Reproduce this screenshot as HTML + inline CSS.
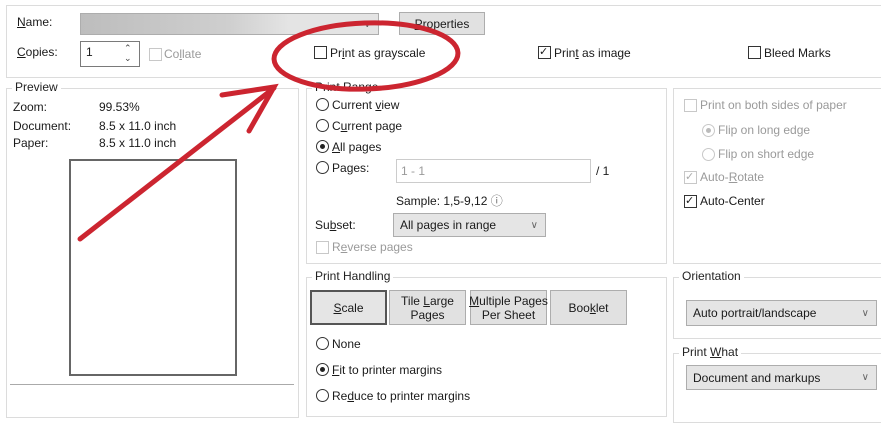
<!DOCTYPE html>
<html><head><meta charset="utf-8"><style>
*{margin:0;padding:0;box-sizing:border-box}
body{width:881px;height:410px;overflow:hidden;background:#fff;font-family:"Liberation Sans",sans-serif;font-size:12px;color:#1a1a1a;position:relative}
.a{position:absolute;white-space:nowrap}
.box{position:absolute;border:1px solid #dcdcdc}
.lg{position:absolute;background:#fff;padding:0 3px;color:#222}
.cb{position:absolute;width:13px;height:13px;border:1px solid #333;background:#fff}
.cb.d{border-color:#c8c8c8}
.rd{position:absolute;width:13px;height:13px;border:1px solid #333;border-radius:50%;background:#fff}
.rd.on::after{content:"";position:absolute;left:3px;top:3px;width:5px;height:5px;border-radius:50%;background:#222}
.rd.d{border-color:#c8c8c8}.rd.d.on::after{background:#bbb}
.dis{color:#9a9a9a}
.btn{position:absolute;background:#e1e1e1;border:1px solid #adadad;text-align:center;line-height:14px;display:flex;align-items:center;justify-content:center}
.btn span{display:block;white-space:nowrap}
.combo{position:absolute;background:#e5e5e5;border:1px solid #adadad;padding-left:6px;display:flex;align-items:center}
.combo::after{content:"\2228";position:absolute;right:7px;font-size:10px;color:#666}
u{text-decoration:underline}
</style></head><body>
<div class="box" style="left:6px;top:5px;width:880px;height:73px"></div>
<div class="a" style="left:17px;top:15px"><u>N</u>ame:</div>
<div class="combo" style="left:80px;top:13px;width:299px;height:22px;background:linear-gradient(90deg,#bdbdbd,#cfcfcf 50%,#e4e4e4 70%,#e4e4e4)"></div>
<div class="btn" style="left:399px;top:12px;width:86px;height:23px"><span><u>P</u>roperties</span></div>
<div class="a" style="left:17px;top:45px"><u>C</u>opies:</div>
<div class="a" style="left:80px;top:41px;width:60px;height:26px;border:1px solid #7a7a7a;padding:3px 5px">1</div>
<div class="a" style="left:124px;top:43px;font-size:9px;line-height:10px;color:#444">&#8963;<br>&#8964;</div>
<div class="cb d" style="left:149px;top:48px"></div><div class="a dis" style="left:164px;top:47px">Co<u>l</u>late</div>
<div class="cb" style="left:314px;top:46px"></div><div class="a" style="left:330px;top:46px">Pr<u>i</u>nt as grayscale</div>
<div class="cb" style="left:538px;top:46px;font-size:11px;line-height:11px">&#10003;</div><div class="a" style="left:554px;top:46px">Prin<u>t</u> as image</div>
<div class="cb" style="left:748px;top:46px"></div><div class="a" style="left:764px;top:46px">Bleed Marks</div>

<div class="box" style="left:6px;top:88px;width:293px;height:330px"></div>
<div class="lg" style="left:12px;top:80px">Preview</div>
<div class="a" style="left:13px;top:100px">Zoom:</div><div class="a" style="left:99px;top:100px">99.53%</div>
<div class="a" style="left:13px;top:119px">Document:</div><div class="a" style="left:99px;top:119px">8.5 x 11.0 inch</div>
<div class="a" style="left:13px;top:136px">Paper:</div><div class="a" style="left:99px;top:136px">8.5 x 11.0 inch</div>
<div class="a" style="left:69px;top:159px;width:168px;height:217px;border:2px solid #666"></div>
<div class="a" style="left:10px;top:384px;width:284px;height:1px;background:#aaa"></div>

<div class="box" style="left:306px;top:88px;width:361px;height:176px"></div>
<div class="lg" style="left:312px;top:80px">Print Range</div>
<div class="rd" style="left:316px;top:98px"></div><div class="a" style="left:332px;top:98px">Current <u>v</u>iew</div>
<div class="rd" style="left:316px;top:119px"></div><div class="a" style="left:332px;top:119px">C<u>u</u>rrent page</div>
<div class="rd on" style="left:316px;top:140px"></div><div class="a" style="left:332px;top:140px"><u>A</u>ll pages</div>
<div class="rd" style="left:316px;top:161px"></div><div class="a" style="left:332px;top:161px">Pa<u>g</u>es:</div>
<div class="a dis" style="left:396px;top:159px;width:195px;height:24px;border:1px solid #ccc;padding:4px 4px">1 - 1</div>
<div class="a" style="left:596px;top:164px">/ 1</div>
<div class="a" style="left:396px;top:192px">Sample: 1,5-9,12 <span style="color:#666">&#9432;</span></div>
<div class="a" style="left:315px;top:218px">Su<u>b</u>set:</div>
<div class="combo" style="left:393px;top:213px;width:153px;height:24px">All pages in range</div>
<div class="cb d" style="left:316px;top:241px"></div><div class="a dis" style="left:332px;top:240px">R<u>e</u>verse pages</div>

<div class="box" style="left:673px;top:88px;width:210px;height:176px"></div>
<div class="cb d" style="left:684px;top:99px"></div><div class="a dis" style="left:700px;top:98px">Print on both sides of paper</div>
<div class="rd d on" style="left:702px;top:124px"></div><div class="a dis" style="left:718px;top:123px">Flip on long edge</div>
<div class="rd d" style="left:702px;top:148px"></div><div class="a dis" style="left:718px;top:147px">Flip on short edge</div>
<div class="cb d" style="left:684px;top:171px;font-size:11px;line-height:11px;color:#aaa">&#10003;</div><div class="a dis" style="left:700px;top:170px">Auto-<u>R</u>otate</div>
<div class="cb" style="left:684px;top:195px;font-size:11px;line-height:11px">&#10003;</div><div class="a" style="left:700px;top:194px">Auto-Center</div>

<div class="box" style="left:306px;top:277px;width:361px;height:140px"></div>
<div class="lg" style="left:312px;top:269px">Print Handling</div>
<div class="btn" style="left:310px;top:290px;width:77px;height:35px;border:2px solid #555;background:#e5e5e5"><span><u>S</u>cale</span></div>
<div class="btn" style="left:389px;top:290px;width:77px;height:35px"><span>Tile <u>L</u>arge<br>Pages</span></div>
<div class="btn" style="left:470px;top:290px;width:77px;height:35px"><span><u>M</u>ultiple Pages<br>Per Sheet</span></div>
<div class="btn" style="left:550px;top:290px;width:77px;height:35px"><span>Boo<u>k</u>let</span></div>
<div class="rd" style="left:316px;top:337px"></div><div class="a" style="left:332px;top:337px">None</div>
<div class="rd on" style="left:316px;top:363px"></div><div class="a" style="left:332px;top:363px"><u>F</u>it to printer margins</div>
<div class="rd" style="left:316px;top:389px"></div><div class="a" style="left:332px;top:389px">Re<u>d</u>uce to printer margins</div>

<div class="box" style="left:673px;top:277px;width:210px;height:62px"></div>
<div class="lg" style="left:679px;top:269px">Orientation</div>
<div class="combo" style="left:686px;top:300px;width:191px;height:26px">Auto portrait/landscape</div>
<div class="box" style="left:673px;top:353px;width:210px;height:70px"></div>
<div class="lg" style="left:679px;top:345px">Print <u>W</u>hat</div>
<div class="combo" style="left:686px;top:365px;width:191px;height:25px">Document and markups</div>

<svg class="a" style="left:0;top:0" width="881" height="410">
<g fill="none" stroke="#cc2530" stroke-width="5" stroke-linecap="round">
<ellipse cx="366" cy="56" rx="92" ry="33" transform="rotate(-2 366 56)"/>
<path d="M80 239 L274 88 M222 95 L274 87 L249 131"/>
</g></svg>
</body></html>
